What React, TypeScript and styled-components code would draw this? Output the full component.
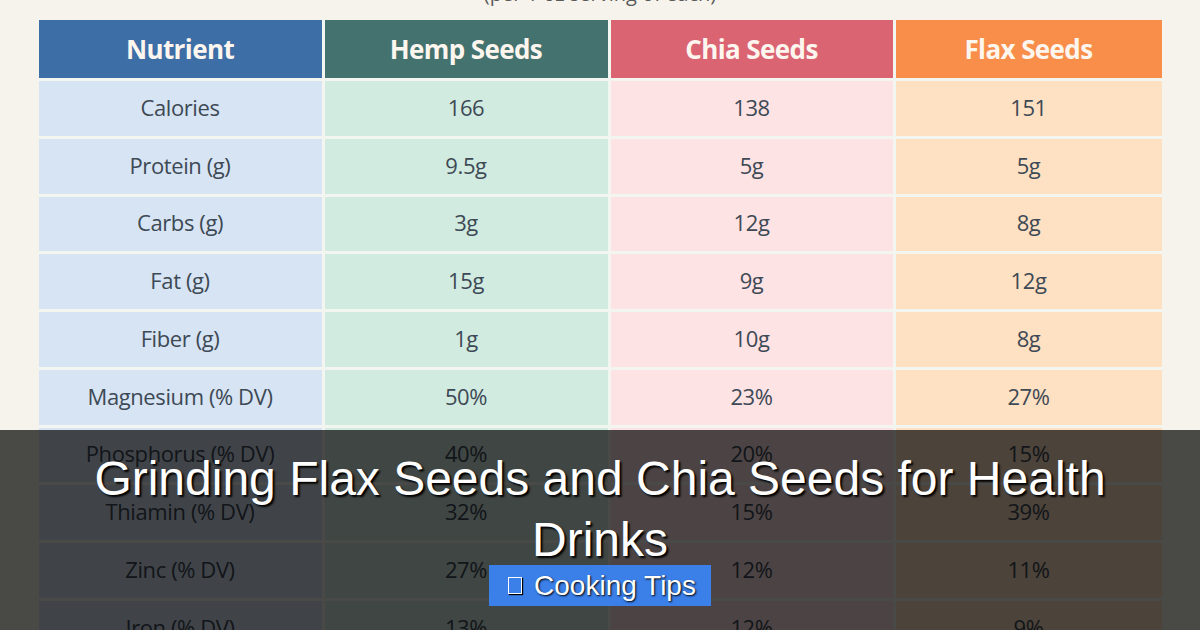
import React from "react";
import styled, { createGlobalStyle } from "styled-components";

const GlobalStyle = createGlobalStyle`
  html, body { margin: 0; padding: 0; }
  body { width: 1200px; height: 630px; overflow: hidden; background: #f6f3ec; }
  * { box-sizing: border-box; }
`;

type Col = { title: string; head: string; cell: string };

const columns: Col[] = [
  { title: "Nutrient", head: "#3e6ea6", cell: "#d7e4f3" },
  { title: "Hemp Seeds", head: "#44726f", cell: "#d2ebe0" },
  { title: "Chia Seeds", head: "#db6473", cell: "#fde3e4" },
  { title: "Flax Seeds", head: "#f88e4a", cell: "#fee0c2" },
];

const rows: string[][] = [
  ["Calories", "166", "138", "151"],
  ["Protein (g)", "9.5g", "5g", "5g"],
  ["Carbs (g)", "3g", "12g", "8g"],
  ["Fat (g)", "15g", "9g", "12g"],
  ["Fiber (g)", "1g", "10g", "8g"],
  ["Magnesium (% DV)", "50%", "23%", "27%"],
  ["Phosphorus (% DV)", "40%", "20%", "15%"],
  ["Thiamin (% DV)", "32%", "15%", "39%"],
  ["Zinc (% DV)", "27%", "12%", "11%"],
  ["Iron (% DV)", "13%", "12%", "9%"],
];

const Page = styled.div`
  position: relative;
  width: 1200px;
  height: 630px;
  overflow: hidden;
  background: #f6f3ec;
  display: flex;
  flex-direction: column;
  align-items: center;
`;

const Subtitle = styled.div`
  margin-top: -16px;
  height: 20px;
  line-height: 20px;
  font-family: "Open Sans", "Noto Sans", sans-serif;
  font-size: 20px;
  color: #5a5a58;
  text-align: center;
`;

const Table = styled.div`
  margin-top: 16px;
  display: grid;
  grid-template-columns: 283px 283px 282px 266px;
  grid-template-rows: 58px;
  grid-auto-rows: 54.75px;
  gap: 3px;
  background: #f3f5f1;
`;

const HeadCell = styled.div<{ $bg: string }>`
  background: ${(p) => p.$bg};
  display: flex;
  align-items: center;
  justify-content: center;
  font-family: "Open Sans", "Noto Sans", sans-serif;
  font-weight: 700;
  font-size: 26px;
  letter-spacing: -0.6px;
  color: #fdf6ef;
`;

const Cell = styled.div<{ $bg: string }>`
  background: ${(p) => p.$bg};
  display: flex;
  align-items: center;
  justify-content: center;
  padding-bottom: 3px;
  font-family: "Open Sans", "Noto Sans", sans-serif;
  font-size: 22px;
  font-stretch: 90%;
  letter-spacing: -0.4px;
  color: #3d4955;
`;

const Overlay = styled.div`
  position: absolute;
  left: 0;
  right: 0;
  bottom: 0;
  height: 200px;
  background: rgba(0, 0, 0, 0.7);
  display: flex;
  flex-direction: column;
  align-items: center;
  padding-top: 18px;
`;

const Title = styled.h1`
  margin: 0;
  width: 1060px;
  font-family: "Liberation Sans", Arial, sans-serif;
  font-weight: 400;
  font-size: 48px;
  line-height: 61px;
  color: #ffffff;
  text-align: center;
  text-shadow: 2px 2px 2px #000;
`;

const Badge = styled.div`
  margin-top: -5px;
  height: 41px;
  display: flex;
  align-items: center;
  gap: 12px;
  padding: 0 15px 0 19px;
  background: #3b7fe9;
  font-family: "Liberation Sans", Arial, sans-serif;
  font-size: 28px;
  color: #ffffff;
  text-shadow: 1px 1px 2px #000;
`;

const Tofu = styled.span`
  display: inline-block;
  width: 14px;
  height: 17px;
  border: 1.5px solid #ffffff;
  box-shadow: 1px 1px 1px #000;
`;

export default function App() {
  return (
    <>
      <GlobalStyle />
      <Page>
        <Subtitle>(per 1 oz serving of each)</Subtitle>
        <Table>
          {columns.map((c) => (
            <HeadCell key={c.title} $bg={c.head}>
              {c.title}
            </HeadCell>
          ))}
          {rows.map((r) =>
            r.map((v, i) => (
              <Cell key={r[0] + i} $bg={columns[i].cell}>
                {v}
              </Cell>
            ))
          )}
        </Table>
        <Overlay>
          <Title>Grinding Flax Seeds and Chia Seeds for Health Drinks</Title>
          <Badge>
            <Tofu />
            <span>Cooking Tips</span>
          </Badge>
        </Overlay>
      </Page>
    </>
  );
}
